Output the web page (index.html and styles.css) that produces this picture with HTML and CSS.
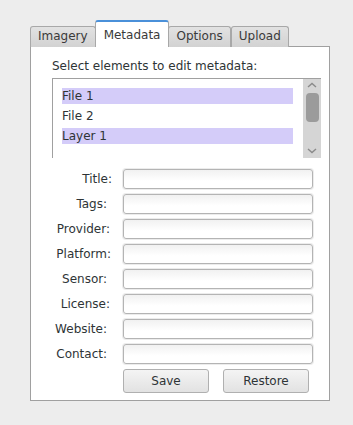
FILE: index.html
```html
<!DOCTYPE html>
<html lang="en">
<head>
    <meta charset="UTF-8">
    <title>Metadata</title>
    <link rel="stylesheet" href="styles.css">
</head>
<body>

<div class="dialog">
    <div class="tabs">
        <div class="tab">Imagery</div>
        <div class="tab active">Metadata</div>
        <div class="tab">Options</div>
        <div class="tab">Upload</div>
    </div>

    <div class="panel">
        <div class="hint">Select elements to edit metadata:</div>

        <div class="listbox">
            <div class="list-items">
                <div class="list-item selected">File 1</div>
                <div class="list-item">File 2</div>
                <div class="list-item selected">Layer 1</div>
            </div>
            <div class="scrollbar">
                <svg class="arrow" width="10" height="6" viewBox="0 0 10 6"><path d="M1 5 L5 1.5 L9 5" fill="none" stroke="#8a8a8a" stroke-width="1.4"/></svg>
                <div class="thumb"></div>
                <svg class="arrow down" width="10" height="6" viewBox="0 0 10 6"><path d="M1 1 L5 4.5 L9 1" fill="none" stroke="#8a8a8a" stroke-width="1.4"/></svg>
            </div>
        </div>

        <div class="form">
            <label>Title:</label><input type="text">
            <label class="pad-5">Tags:</label><input type="text">
            <label class="pad-2">Provider:</label><input type="text">
            <label class="pad-1">Platform:</label><input type="text">
            <label class="pad-5">Sensor:</label><input type="text">
            <label class="pad-2">License:</label><input type="text">
            <label class="pad-5">Website:</label><input type="text">
            <label class="pad-5">Contact:</label><input type="text">
        </div>

        <div class="buttons">
            <button>Save</button>
            <button>Restore</button>
        </div>
    </div>
</div>

</body>
</html>
```

FILE: styles.css
```css
body {
    margin: 0;
    background-color: #ededed;
    font-family: "DejaVu Sans", sans-serif;
    font-size: 12px;
    color: #2e3436;
}
.dialog {
    padding: 20px 0 0 30px;
    width: 300px;
}
.tabs {
    display: flex;
    align-items: flex-end;
    height: 27px;
    position: relative;
    z-index: 1;
    margin-bottom: -1px;
}
.tab {
    height: 20px;
    line-height: 18px;
    padding: 0 7px;
    border: 1px solid #a8a8a8;
    border-bottom: none;
    border-radius: 3px 3px 0 0;
    background: linear-gradient(#e2e2e2, #d2d2d2);
    color: #3a3a3a;
}
.tab.active {
    height: 27px;
    line-height: 26px;
    padding: 0 8px;
    background: #ffffff;
    border-top: 2px solid #4a90d9;
    border-color: #4a90d9 #a8a8a8 #ffffff #a8a8a8;
    margin-left: -1px;
    margin-right: -1px;
    box-sizing: border-box;
}
.panel {
    background: #ffffff;
    border: 1px solid #a0a0a0;
    padding: 11px 0 0 21px;
    box-sizing: border-box;
    height: 355px;
}
.hint {
    line-height: 16px;
    color: #2e3436;
}
.listbox {
    display: flex;
    margin-top: 4px;
    width: 269px;
    height: 80px;
    border-top: 1px solid #a0a0a0;
    border-left: 1px solid #a0a0a0;
    box-sizing: border-box;
}
.list-items {
    flex: 1;
    padding: 9px 10px 0 9px;
}
.list-item {
    height: 16px;
    line-height: 16px;
    margin-bottom: 4px;
    color: #2e3436;
}
.list-item.selected {
    background: #d4ccf9;
}
.scrollbar {
    width: 18px;
    background: #d5d5d5;
    display: flex;
    flex-direction: column;
    align-items: center;
}
.arrow {
    margin-top: 3px;
}
.arrow.down {
    margin-top: auto;
    margin-bottom: 4px;
}
.thumb {
    width: 13px;
    height: 29px;
    margin-top: 5px;
    border-radius: 4px;
    background: #9b9b9b;
}
.form {
    display: grid;
    grid-template-columns: 60px 190px;
    column-gap: 11px;
    row-gap: 5px;
    margin-top: 11px;
    align-items: center;
}
.form label {
    text-align: right;
    white-space: nowrap;
    color: #2e3436;
}
.form label.pad-1 { padding-right: 1px; }
.form label.pad-2 { padding-right: 2px; }
.form label.pad-5 { padding-right: 5px; }
.form input {
    height: 20px;
    margin: 0;
    padding: 0 4px;
    box-sizing: border-box;
    border: 1px solid #b4b4b4;
    border-radius: 3px;
    background: linear-gradient(#f1f1f1, #ffffff 60%);
    box-shadow: 0 0 0 1px #ececec;
    font-family: "DejaVu Sans", sans-serif;
    font-size: 12px;
}
.buttons {
    display: flex;
    gap: 14px;
    margin: 5px 0 0 71px;
}
button {
    width: 86px;
    height: 24px;
    border: 1px solid #b0b0b0;
    border-radius: 3px;
    background: linear-gradient(#f4f4f4, #e2e2e2);
    font-family: "DejaVu Sans", sans-serif;
    font-size: 12px;
    color: #2e3436;
    padding: 0;
}
```
